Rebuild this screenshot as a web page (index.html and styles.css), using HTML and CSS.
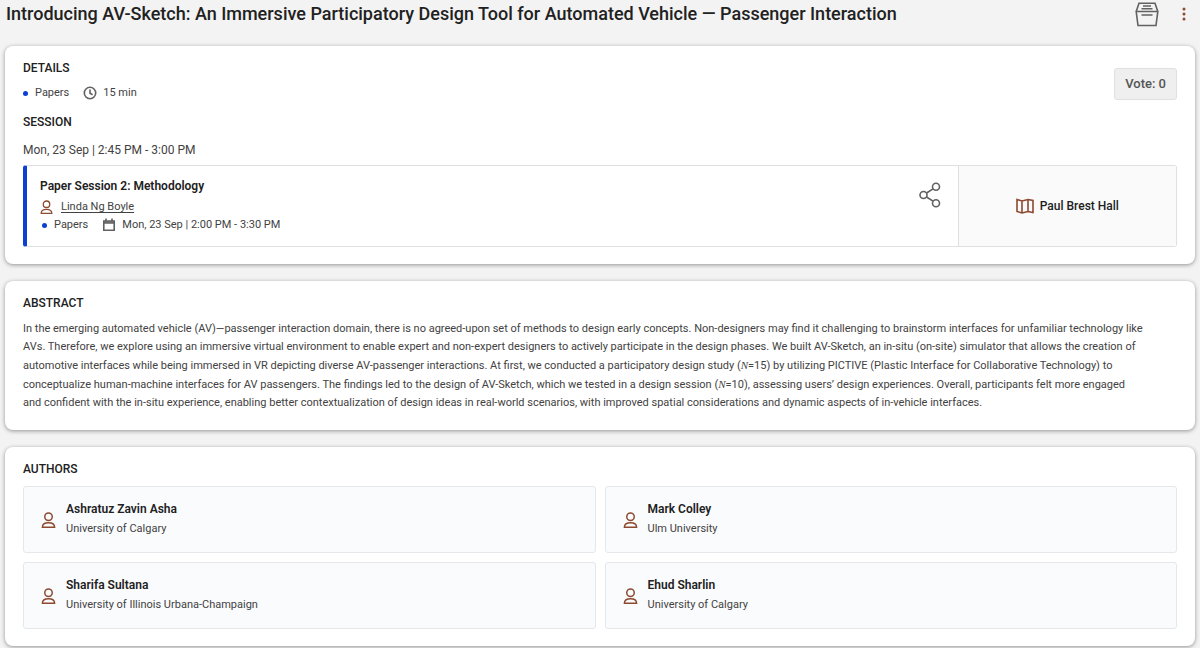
FILE: index.html
```
<!DOCTYPE html>
<html lang="en">
<head>
<meta charset="UTF-8">
<meta name="viewport" content="width=device-width, initial-scale=1.0">
<title>Introducing AV-Sketch</title>
<link rel="stylesheet" href="styles.css">
</head>
<body>
  <svg class="symbols" aria-hidden="true">
    <symbol id="person" viewBox="0 0 16 18">
      <circle cx="8" cy="5" r="4"/>
      <path d="M1.500 16.200c0-3.200 2.400-4.800 6.500-4.800s6.500 1.600 6.500 4.800z"/>
    </symbol>
  </svg>

  <header class="page-header">
    <h1>Introducing AV-Sketch: An Immersive Participatory Design Tool for Automated Vehicle — Passenger Interaction</h1>
    <div class="header-actions">
      <button class="icon-button" aria-label="Files">
        <svg class="archive-icon" width="24" height="26" viewBox="0 0 24 26">
          <path d="M1.200 10.500L4 2.200h16L22.800 10.500M1.200 10.500h21.600L21 24.500H3z"/>
          <path d="M8 5h8M6.500 7.700h11M6.500 14h11"/>
        </svg>
      </button>
      <button class="icon-button" aria-label="More options">
        <svg class="more-icon" width="6" height="14" viewBox="0 0 6 14">
          <circle cx="3" cy="2" r="1.500"/>
          <circle cx="3" cy="7" r="1.500"/>
          <circle cx="3" cy="12" r="1.500"/>
        </svg>
      </button>
    </div>
  </header>

  <main>
    <section class="card">
      <div class="details">
        <div>
          <h2>DETAILS</h2>
          <div class="meta">
            <span class="dot"></span>
            <span class="track">Papers</span>
            <svg class="meta-icon" width="14" height="14" viewBox="0 0 14 14">
              <circle cx="7" cy="7" r="5.700"/>
              <path d="M7 3.500V7.200l2.600 1.500"/>
            </svg>
            <span>15 min</span>
          </div>
        </div>
        <button class="vote">Vote: 0</button>
      </div>
      <h2>SESSION</h2>
      <p class="time">Mon, 23 Sep | 2:45 PM - 3:00 PM</p>
      <div class="session">
        <div class="session-info">
          <h3>Paper Session 2: Methodology</h3>
          <div class="chair">
            <svg class="person" width="13" height="15"><use href="#person"/></svg>
            <a href="#">Linda Ng Boyle</a>
          </div>
          <div class="meta">
            <span class="dot"></span>
            <span class="track">Papers</span>
            <svg class="meta-icon" width="14" height="14" viewBox="0 0 14 14">
              <path d="M1.800 3h10.400v9.200H1.800zM1.800 5h10.400"/>
              <path d="M1.800 4h10.400M4 0.500v2.500M10 0.500v2.500"/>
            </svg>
            <span>Mon, 23 Sep | 2:00 PM - 3:30 PM</span>
          </div>
        </div>
        <button class="icon-button share" aria-label="Share">
          <svg class="share-icon" width="22" height="26" viewBox="0 0 22 26">
            <circle cx="4.500" cy="13" r="3.500"/>
            <circle cx="17" cy="4.800" r="3.500"/>
            <circle cx="17" cy="21.200" r="3.500"/>
            <path d="M7.600 11L14 6.800M7.600 15L14 19.200"/>
          </svg>
        </button>
        <div class="location">
          <svg class="map-icon" width="18" height="16" viewBox="0 0 18 16">
            <path d="M1 1.500l5 1.500 6-1.500 5 1v12l-5-1L6 15l-5-1.500zM6 3v12M12 1.500v12"/>
          </svg>
          <span>Paul Brest Hall</span>
        </div>
      </div>
    </section>

    <section class="card">
      <h2>ABSTRACT</h2>
      <p class="abstract">In the emerging automated vehicle (AV)—passenger interaction domain, there is no agreed-upon set of methods to design early concepts. Non-designers may find it challenging to brainstorm interfaces for unfamiliar technology like AVs. Therefore, we explore using an immersive virtual environment to enable expert and non-expert designers to actively participate in the design phases. We built AV-Sketch, an in-situ (on-site) simulator that allows the creation of automotive interfaces while being immersed in VR depicting diverse AV-passenger interactions. At first, we conducted a participatory design study (<i>N</i>=15) by utilizing PICTIVE (Plastic Interface for Collaborative Technology) to conceptualize human-machine interfaces for AV passengers. The findings led to the design of AV-Sketch, which we tested in a design session (<i>N</i>=10), assessing users’ design experiences. Overall, participants felt more engaged and confident with the in-situ experience, enabling better contextualization of design ideas in real-world scenarios, with improved spatial considerations and dynamic aspects of in-vehicle interfaces.</p>
    </section>

    <section class="card">
      <h2>AUTHORS</h2>
      <div class="authors">
        <div class="author">
          <svg class="person" width="15" height="17"><use href="#person"/></svg>
          <div>
            <h3>Ashratuz Zavin Asha</h3>
            <p>University of Calgary</p>
          </div>
        </div>
        <div class="author">
          <svg class="person" width="15" height="17"><use href="#person"/></svg>
          <div>
            <h3>Mark Colley</h3>
            <p>Ulm University</p>
          </div>
        </div>
        <div class="author">
          <svg class="person" width="15" height="17"><use href="#person"/></svg>
          <div>
            <h3>Sharifa Sultana</h3>
            <p>University of Illinois Urbana-Champaign</p>
          </div>
        </div>
        <div class="author">
          <svg class="person" width="15" height="17"><use href="#person"/></svg>
          <div>
            <h3>Ehud Sharlin</h3>
            <p>University of Calgary</p>
          </div>
        </div>
      </div>
    </section>
  </main>
</body>
</html>
```
FILE: styles.css
```
* {
  box-sizing: border-box;
}
body {
  margin: 0;
  background-color: #f3f3f3;
  color: #424242;
  font-family: Roboto, sans-serif;
  font-size: 11px;
  line-height: 18px;
}
h1, h2, h3, p {
  margin: 0;
}
h1, h2, h3 {
  color: #212121;
  font-weight: 600;
}
h1 {
  font-size: 18px;
  font-weight: 500;
  line-height: 28px;
}
h2 {
  font-size: 12px;
  font-weight: 500;
  line-height: 18px;
}
h3 {
  font-size: 12px;
  line-height: 18px;
}
button {
  font-family: inherit;
  cursor: pointer;
}
svg {
  display: block;
  flex: none;
  fill: none;
  stroke: #616161;
  stroke-width: 1.6;
}
.symbols {
  position: absolute;
  width: 0;
  height: 0;
}
.page-header {
  display: flex;
  justify-content: space-between;
  padding: 0 13px 0 6px;
}
.header-actions {
  display: flex;
  align-items: center;
  gap: 22px;
}
.icon-button {
  padding: 0;
  border: 0;
  background: none;
}
.more-icon {
  fill: #8d4a30;
  stroke: none;
}
main {
  display: flex;
  flex-direction: column;
  gap: 17px;
  padding: 18px 5px 2px;
}
.card {
  padding: 13px 18px 17px;
  border-radius: 8px;
  background-color: #fff;
  box-shadow: 0 1px 4px rgba(0, 0, 0, 0.4);
}
.details {
  display: flex;
  justify-content: space-between;
  align-items: center;
  padding-bottom: 11px;
}
.meta {
  display: flex;
  align-items: center;
}
.details .meta {
  margin-top: 7px;
}
.dot {
  width: 5px;
  height: 5px;
  margin-right: 7px;
  border-radius: 50%;
  background-color: #0d3fd1;
}
.track {
  margin-right: 14px;
}
.meta-icon {
  margin-right: 6px;
}
.vote {
  height: 32px;
  margin-top: 6px;
  padding: 0 10px;
  border: 1px solid #e0e0e0;
  border-radius: 3px;
  background-color: #efefef;
  color: #555;
  font-size: 13px;
  font-weight: 500;
}
.time {
  margin: 10px 0 6px;
  font-size: 12px;
}
.session {
  display: flex;
  border: 1px solid #e0e0e0;
  border-left: 4px solid #0d3fd1;
  border-radius: 3px;
}
.session-info {
  flex: 1;
  padding: 11px 13px 12px;
}
.chair {
  display: flex;
  align-items: center;
  gap: 8px;
  padding-top: 3px;
}
.chair a {
  color: inherit;
  text-underline-offset: 2px;
}
.person {
  stroke: #8d4a30;
}
.session .dot {
  margin-left: 2px;
}
.share {
  align-self: flex-start;
  padding: 16px 17px;
}
.location {
  display: flex;
  align-items: center;
  justify-content: center;
  gap: 6px;
  width: 19%;
  border-left: 1px solid #e0e0e0;
  background-color: #fafafa;
  color: #212121;
  font-size: 12px;
  font-weight: 500;
}
.map-icon {
  stroke: #8d4a30;
}
.abstract {
  margin-top: 8px;
  padding: 0 34px 1px 0;
}
.abstract i {
  font-family: "Liberation Serif", serif;
}
.authors {
  display: grid;
  grid-template-columns: 1fr 1fr;
  gap: 9px;
  margin-top: 8px;
}
.author {
  display: flex;
  align-items: center;
  gap: 10px;
  padding: 13px 17px 12px;
  border: 1px solid #e5e7eb;
  border-radius: 3px;
  background-color: #fafbfd;
}
.author p {
  line-height: 22px;
}
```
